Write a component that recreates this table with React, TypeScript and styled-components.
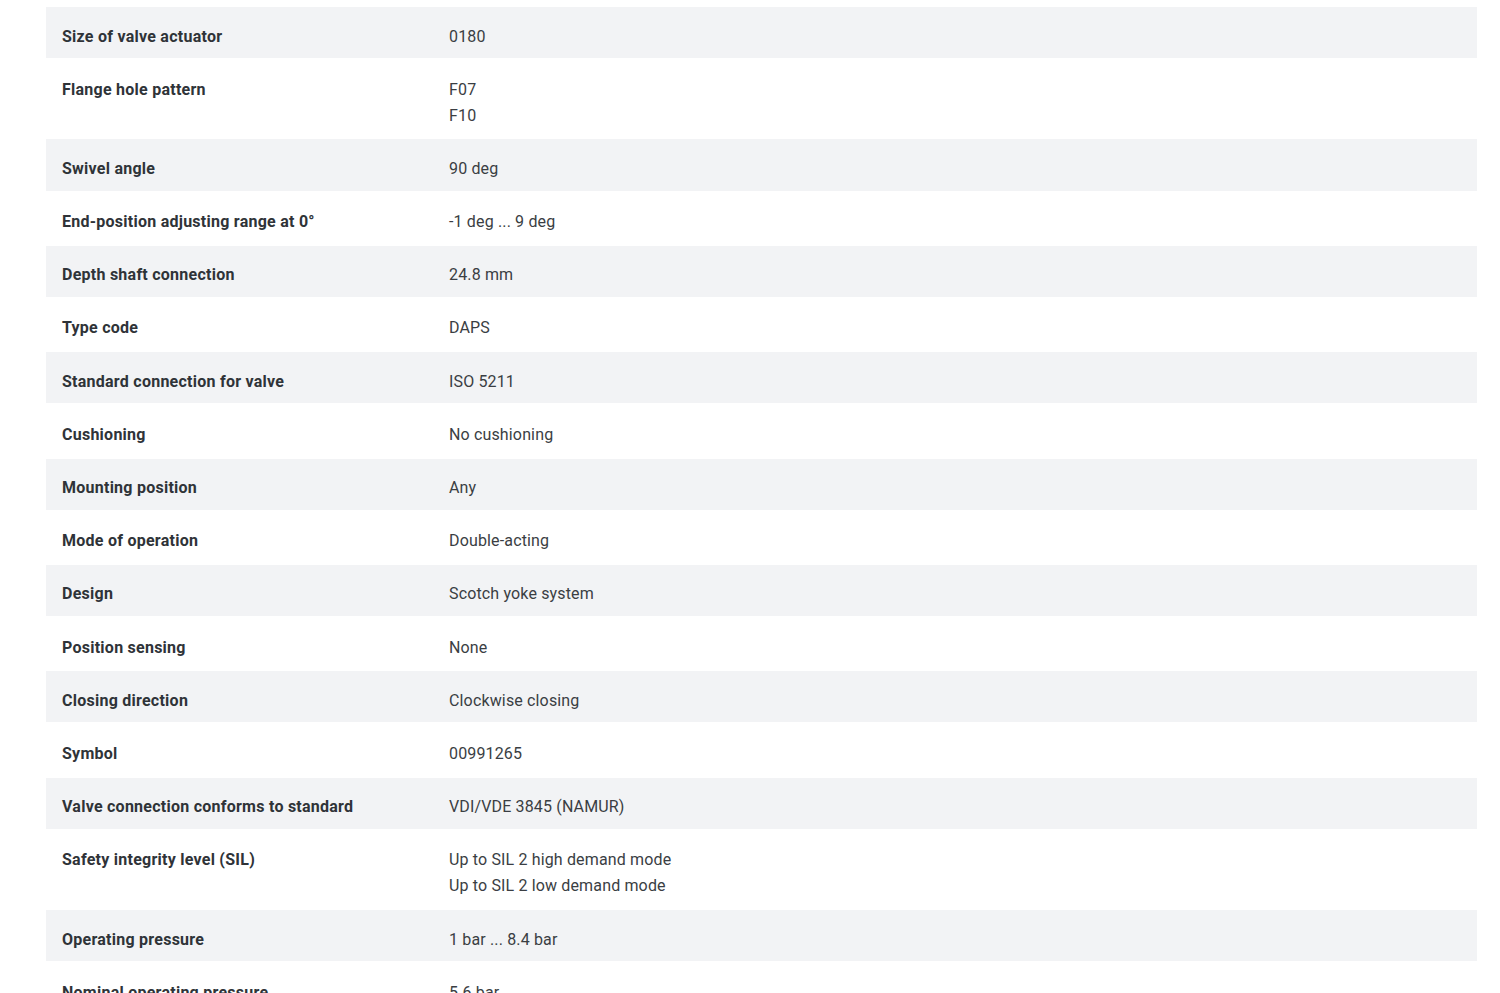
import React, { FunctionComponent } from 'react';
import styled, { createGlobalStyle } from 'styled-components';

interface Spec {
  label: string;
  values: string[];
}

const specs: Spec[] = [
  { label: 'Size of valve actuator', values: ['0180'] },
  { label: 'Flange hole pattern', values: ['F07', 'F10'] },
  { label: 'Swivel angle', values: ['90 deg'] },
  { label: 'End-position adjusting range at 0°', values: ['-1 deg ... 9 deg'] },
  { label: 'Depth shaft connection', values: ['24.8 mm'] },
  { label: 'Type code', values: ['DAPS'] },
  { label: 'Standard connection for valve', values: ['ISO 5211'] },
  { label: 'Cushioning', values: ['No cushioning'] },
  { label: 'Mounting position', values: ['Any'] },
  { label: 'Mode of operation', values: ['Double-acting'] },
  { label: 'Design', values: ['Scotch yoke system'] },
  { label: 'Position sensing', values: ['None'] },
  { label: 'Closing direction', values: ['Clockwise closing'] },
  { label: 'Symbol', values: ['00991265'] },
  { label: 'Valve connection conforms to standard', values: ['VDI/VDE 3845 (NAMUR)'] },
  {
    label: 'Safety integrity level (SIL)',
    values: ['Up to SIL 2 high demand mode', 'Up to SIL 2 low demand mode'],
  },
  { label: 'Operating pressure', values: ['1 bar ... 8.4 bar'] },
  { label: 'Nominal operating pressure', values: ['5.6 bar'] },
];

const App: FunctionComponent = () => {
  return (
    <Page>
      <GlobalStyle />
      <SpecTable>
        {specs.map((spec, i) => (
          <SpecRow key={spec.label} striped={i % 2 === 0}>
            <Label>{spec.label}</Label>
            <Values>
              {spec.values.map((v) => (
                <Value key={v}>{v}</Value>
              ))}
            </Values>
          </SpecRow>
        ))}
      </SpecTable>
    </Page>
  );
};

const GlobalStyle = createGlobalStyle`
  html, body {
    margin: 0;
    padding: 0;
    background: #ffffff;
    overflow: hidden;
  }
  body {
    font-family: Roboto, "Noto Sans", sans-serif;
    color: #333333;
  }
`;

const Page = styled.div`
  padding: 7px 23px 0 46px;
`;

const SpecTable = styled.div`
  display: flex;
  flex-direction: column;
  gap: 2px;
`;

const SpecRow = styled.div<{ striped: boolean }>`
  display: grid;
  grid-template-columns: 387px 1fr;
  padding: 16.5px 16px 8.7px;
  background: ${(p) => (p.striped ? '#f2f3f5' : '#ffffff')};
  font-size: 16px;
  line-height: 26px;
`;

const Label = styled.div`
  font-weight: 700;
  color: #2f3338;
  letter-spacing: 0.25px;
`;

const Values = styled.div`
  display: flex;
  flex-direction: column;
`;

const Value = styled.div`
  color: #3a3e43;
  font-weight: 400;
  letter-spacing: 0.15px;
`;

export default App;
